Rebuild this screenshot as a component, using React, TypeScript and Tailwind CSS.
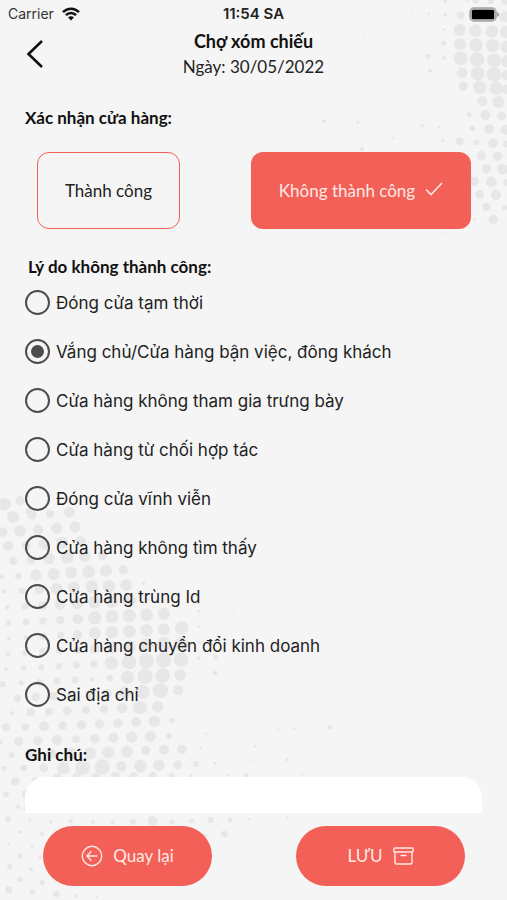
import React, { useState } from "react";

type Dot = [x: number, y: number, r: number];

const topRightDots: Dot[] = [
  [573, 3, 6], [640, 3, 4], [665, 2, 9], [710, 3, 10], [752, 4, 10],
  [476, 38, 3], [525, 42, 4], [573, 44, 6], [620, 46, 12], [665, 46, 14], [752, 50, 16],
  [333, 114, 3], [570, 88, 4], [617, 89, 18], [664, 92, 19], [714, 94, 19], [756, 96, 18],
  [569, 130, 7], [618, 133, 18], [666, 135, 20], [716, 137, 20], [757, 140, 18],
  [523, 169, 8], [571, 173, 7], [620, 175, 21], [669, 178, 22], [720, 181, 21], [758, 184, 18],
  [528, 212, 6], [624, 218, 16], [671, 221, 21], [720, 223, 22], [757, 225, 15],
  [628, 259, 14], [677, 262, 20], [726, 265, 20], [757, 268, 14],
  [685, 304, 15], [733, 306, 18], [646, 344, 8], [694, 346, 15], [743, 348, 13],
  [210, 364, 6], [312, 367, 5], [360, 369, 3], [505, 378, 5], [555, 381, 4],
  [655, 385, 9], [706, 387, 15], [754, 389, 15], [418, 414, 4], [566, 422, 5],
  [617, 424, 12], [667, 427, 9], [717, 429, 15], [757, 432, 10], [323, 447, 7],
  [681, 467, 14], [731, 469, 14], [697, 506, 14], [746, 508, 17],
  [660, 544, 14], [712, 545, 16], [757, 548, 10], [677, 583, 13], [726, 585, 15],
  [697, 621, 12], [752, 623, 8], [662, 658, 4], [718, 658, 14], [574, 700, 3],
];

const bottomLeftDots: Dot[] = [
  [14, 72, 19], [60, 62, 13], [90, 92, 12], [39, 111, 18], [96, 105, 14], [151, 102, 13], [208, 97, 16], [427, 82, 4],
  [8, 157, 15], [60, 153, 17], [115, 149, 15], [170, 145, 17], [225, 141, 17],
  [24, 199, 15], [78, 196, 14], [132, 192, 17], [187, 188, 18], [242, 184, 16],
  [40, 243, 13], [93, 239, 13], [147, 236, 17], [202, 232, 19], [254, 228, 18], [308, 226, 14],
  [3, 289, 8], [55, 288, 10], [108, 285, 17], [161, 282, 18], [214, 278, 18], [266, 275, 19], [318, 272, 18], [370, 269, 14],
  [13, 335, 7], [65, 332, 10], [118, 329, 14], [170, 326, 18], [222, 323, 18], [275, 320, 19], [327, 318, 19], [379, 315, 18], [430, 311, 6],
  [22, 382, 7], [75, 379, 11], [128, 376, 13], [180, 373, 16], [232, 370, 18], [284, 367, 19], [336, 364, 20], [388, 361, 20], [440, 358, 7],
  [25, 429, 8], [78, 426, 10], [129, 423, 11], [181, 420, 12], [233, 417, 16], [284, 413, 20], [336, 410, 20], [388, 407, 20], [440, 404, 19], [492, 401, 18], [596, 394, 5], [702, 391, 3],
  [27, 476, 6], [78, 473, 7], [130, 469, 11], [182, 466, 11], [233, 463, 14], [285, 460, 18], [336, 457, 19], [388, 454, 19], [440, 451, 19], [492, 448, 18], [545, 444, 20], [596, 440, 4],
  [24, 522, 7], [75, 519, 8], [129, 515, 11], [179, 512, 11], [232, 509, 12], [284, 506, 15], [336, 503, 18], [388, 500, 19], [440, 496, 21], [492, 493, 22], [544, 491, 20], [598, 488, 4],
  [18, 568, 6], [71, 565, 8], [124, 562, 9], [177, 559, 10], [229, 555, 11], [282, 552, 11], [334, 549, 20], [387, 546, 22], [439, 543, 23], [491, 540, 23], [543, 538, 22], [596, 535, 6], [648, 532, 7],
  [8, 613, 9], [64, 609, 8], [118, 607, 10], [171, 603, 10], [225, 600, 11], [277, 598, 7], [329, 595, 10], [383, 592, 20], [435, 589, 23], [488, 587, 22], [540, 585, 17], [645, 579, 7],
  [52, 655, 11], [107, 651, 13], [160, 648, 12], [215, 645, 12], [268, 642, 12], [322, 640, 14], [375, 637, 18], [428, 635, 21], [481, 632, 23], [534, 630, 15],
  [37, 700, 7], [92, 697, 12], [147, 695, 12], [202, 692, 13], [258, 690, 13], [312, 687, 13], [367, 684, 16], [420, 682, 20], [473, 680, 17],
  [18, 742, 12], [76, 741, 11], [132, 739, 15], [188, 737, 13], [245, 735, 14], [299, 732, 14], [354, 730, 14], [409, 727, 15], [463, 724, 17], [516, 722, 8], [882, 747, 5], [990, 742, 7], [836, 749, 3],
  [0, 787, 8], [56, 784, 14], [114, 782, 14], [171, 780, 16], [228, 778, 12], [285, 776, 14], [340, 773, 15], [395, 771, 17], [451, 769, 17], [506, 767, 9], [618, 762, 4], [766, 799, 5],
  [35, 825, 9], [96, 822, 14], [154, 821, 14], [213, 820, 18], [270, 820, 18], [325, 817, 18], [381, 815, 18], [437, 811, 14], [492, 809, 15], [546, 808, 14], [602, 806, 4], [862, 839, 5],
  [11, 865, 8], [71, 864, 10], [131, 863, 13], [190, 864, 19], [248, 863, 22], [307, 861, 23], [364, 859, 16], [421, 858, 19], [477, 856, 17], [533, 854, 13], [588, 852, 9], [645, 850, 5], [752, 845, 3],
  [46, 904, 13], [107, 904, 12], [172, 894, 14], [230, 894, 15], [287, 892, 14], [345, 890, 14], [401, 888, 12], [458, 886, 11], [515, 886, 8], [573, 887, 6], [684, 885, 4], [740, 887, 7], [906, 883, 4],
  [18, 943, 9], [80, 944, 14], [81, 984, 10], [54, 980, 7],
  [24, 1018, 9], [89, 1021, 5], [152, 1025, 5], [212, 1023, 7], [278, 1027, 6], [337, 1027, 7], [399, 1026, 9], [458, 1023, 15], [516, 1026, 8], [575, 1023, 7], [632, 1020, 9], [690, 1019, 8], [748, 1018, 4], [862, 1014, 4],
  [60, 1056, 6], [126, 1062, 6], [673, 1062, 10], [616, 1066, 6],
  [26, 1090, 5], [97, 1098, 5], [61, 1128, 8], [121, 1133, 5],
  [29, 1160, 8], [94, 1168, 6], [61, 1198, 8], [126, 1207, 8], [27, 1229, 11], [97, 1237, 8], [169, 1242, 10], [230, 1248, 5], [290, 1251, 4],
];

const reasons = [
  "Đóng cửa tạm thời",
  "Vắng chủ/Cửa hàng bận việc, đông khách",
  "Cửa hàng không tham gia trưng bày",
  "Cửa hàng từ chối hợp tác",
  "Đóng cửa vĩnh viễn",
  "Cửa hàng không tìm thấy",
  "Cửa hàng trùng Id",
  "Cửa hàng chuyển đổi kinh doanh",
  "Sai địa chỉ",
];

function Dots({ dots }: { dots: Dot[] }) {
  return (
    <g fill="#e7e7e7">
      {dots.map(([x, y, r], i) => (
        <circle key={i} cx={x} cy={y} r={r} />
      ))}
    </g>
  );
}

function Backdrop() {
  return (
    <div aria-hidden="true" className="pointer-events-none absolute inset-0 -z-10 overflow-hidden">
      <svg viewBox="0 0 759 720" className="absolute top-0 right-0 h-[240px] w-[253px]">
        <Dots dots={topRightDots} />
      </svg>
      <svg viewBox="0 0 1521 1260" className="absolute bottom-0 left-0 h-[420px] w-[507px]">
        <Dots dots={bottomLeftDots} />
      </svg>
    </div>
  );
}

function StatusBar() {
  return (
    <div className="grid h-7 grid-cols-3 items-center px-2 font-['Inter',sans-serif] text-sm text-[#333]">
      <div className="flex items-center gap-2">
        <span>Carrier</span>
        <svg viewBox="0 0 18 14" className="h-3.5 w-[18px]" fill="none" stroke="#111" strokeWidth="2.5">
          <path d="M1 5.2C5.5.6 12.5.6 17 5.2" />
          <path d="M3.9 8.2c2.9-3 7.3-3 10.2 0" />
          <path d="M9 13.4 6.1 10.4c1.6-1.6 4.2-1.6 5.8 0Z" fill="#111" stroke="none" />
        </svg>
      </div>
      <span className="text-center text-[15px] font-semibold text-[#222]">11:54 SA</span>
      <svg viewBox="0 0 30 15" className="h-[15px] w-[30px] justify-self-end">
        <rect x="1" y="1" width="26" height="13" rx="4" fill="#ccc" stroke="#a3a3a3" strokeWidth="1.5" />
        <rect x="2.8" y="2.8" width="22.4" height="9.4" rx="1.5" fill="#000" />
        <path d="M28.3 5v5c2.2-.9 2.2-4.100 0-5Z" fill="#8c8c8c" />
      </svg>
    </div>
  );
}

export default function App() {
  const [success, setSuccess] = useState(false);
  const [reason, setReason] = useState(1);

  return (
    <div className="relative isolate flex min-h-screen flex-col bg-[#f5f5f5] font-['Lato','Noto_Sans',sans-serif] text-[17px] leading-[26px] text-[#222]">
      <Backdrop />
      <StatusBar />
      <header className="grid grid-cols-[48px_1fr_48px] items-center">
        <button type="button" aria-label="Trở về" className="flex justify-end pr-1">
          <svg viewBox="0 0 18 30" className="h-[30px] w-[18px]" fill="none" stroke="#111" strokeWidth="2.6">
            <path d="M16 2 2.500 15 16 28" />
          </svg>
        </button>
        <div className="text-center">
          <h1 className="text-lg leading-[26px] font-bold text-[#111]">Chợ xóm chiếu</h1>
          <p>Ngày: 30/05/2022</p>
        </div>
      </header>

      <main className="flex flex-1 flex-col px-[25px] pt-[25px]">
        <h2 className="font-bold text-[#111]">Xác nhận cửa hàng:</h2>
        <div className="mt-[21px] flex justify-between pr-[11px] pl-3">
          <button
            type="button"
            aria-pressed={success}
            onClick={() => setSuccess(true)}
            className="h-[77px] w-[143px] rounded-xl border border-[#f26057]"
          >
            Thành công
          </button>
          <button
            type="button"
            aria-pressed={!success}
            onClick={() => setSuccess(false)}
            className="flex h-[77px] w-[220px] items-center justify-center gap-2.5 rounded-xl bg-[#f26057] text-[#ffe9e6]"
          >
            Không thành công
            <svg viewBox="0 0 18 14" className="mb-1 h-3.5 w-[18px]" fill="none" stroke="currentColor" strokeWidth="1.6">
              <path d="m1 7.500 5 5L17 1" />
            </svg>
          </button>
        </div>

        <fieldset className="mt-[27px]">
          <legend className="pl-[3px] leading-[22px] font-bold text-[#111]">Lý do không thành công:</legend>
          {reasons.map((text, i) => (
            <label key={text} className="flex h-[49px] items-center gap-1.5 font-['Inter','Noto_Sans',sans-serif]">
              <input
                type="radio"
                name="reason"
                checked={reason === i}
                onChange={() => setReason(i)}
                className="grid size-[25px] shrink-0 appearance-none place-items-center rounded-full border-2 border-[#4c4c4c] before:size-[13px] before:rounded-full checked:before:bg-[#4c4c4c]"
              />
              {text}
            </label>
          ))}
        </fieldset>

        <label htmlFor="note" className="mt-[23px] font-bold text-[#111]">Ghi chú:</label>
        <textarea id="note" rows={1} className="mt-[9px] block min-h-9 w-full flex-1 resize-none rounded-t-[20px] bg-white px-5 py-1 outline-none" />
      </main>

      <footer className="flex justify-between pt-[13px] pr-[42px] pb-[14px] pl-[43px] text-[#ffe9e6]">
        <button type="button" className="flex h-[60px] w-[169px] items-center justify-center gap-2.5 rounded-full bg-[#f26057]">
          <svg viewBox="0 0 22 22" className="size-[22px]" fill="none" stroke="currentColor" strokeWidth="1.4">
            <circle cx="11" cy="11" r="9.700" />
            <path d="M16.500 11H6M10.500 6.300 5.800 11l4.700 4.700" />
          </svg>
          Quay lại
        </button>
        <button type="button" className="flex h-[60px] w-[169px] items-center justify-center gap-2.5 rounded-full bg-[#f26057]">
          LƯU
          <svg viewBox="0 0 21 18" className="h-[18px] w-[21px]" fill="none" stroke="currentColor" strokeWidth="1.4">
            <rect x="0.800" y="1" width="19.400" height="4" rx="1.200" />
            <path d="M2 5v10.500a1.500 1.500 0 0 0 1.500 1.500h14a1.500 1.500 0 0 0 1.500-1.500V5M7.500 8.500h6" />
          </svg>
        </button>
      </footer>
    </div>
  );
}
